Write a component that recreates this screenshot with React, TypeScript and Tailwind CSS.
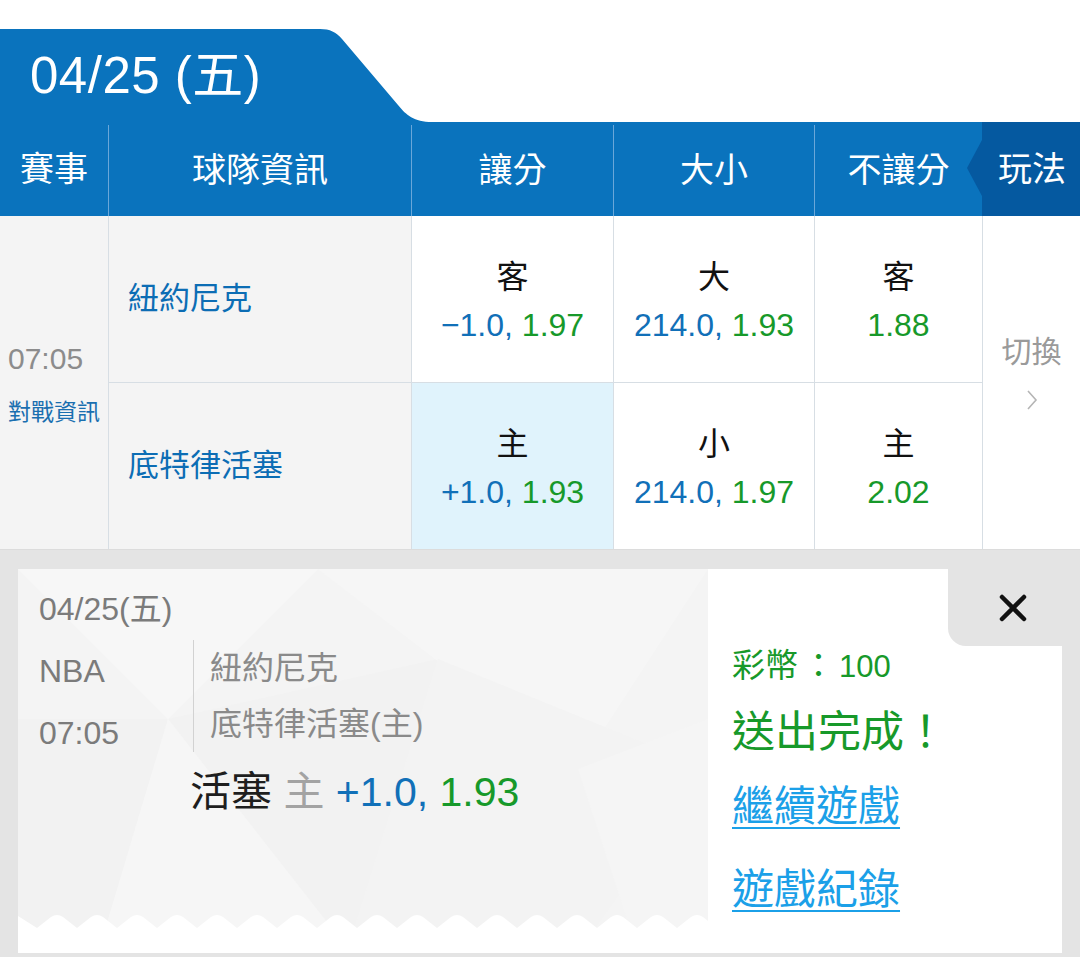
import React from "react";

const zigzag = (() => {
  let d = "M0 39 L0 2";
  for (let k = 0; k < 17; k++) {
    const v = 19 + 40 * k;
    const p = 39 + 40 * k;
    d += ` L${v} 14 L${p - 6} 3 Q${p} -1 ${p + 6} 3`;
  }
  d += " L699 14 L699 39 Z";
  return d;
})();

function Chevron() {
  return (
    <svg width="14" height="22" viewBox="0 0 14 22" fill="none">
      <path d="M3 2 L11 11 L3 20" stroke="#b5b5b5" strokeWidth="1.6" />
    </svg>
  );
}

function Close() {
  return (
    <svg width="28" height="28" viewBox="0 0 28 28">
      <path d="M3 3 L25 25 M25 3 L3 25" stroke="#111" strokeWidth="4.5" strokeLinecap="round" />
    </svg>
  );
}

function Odds({ label, line, price, hl }: { label: string; line?: string; price: string; hl?: boolean }) {
  return (
    <div
      className={
        "flex flex-col items-center justify-center pt-[4px] border-l border-[#d7dee4] text-[32px] " +
        (hl ? "bg-[#e0f3fc]" : "bg-white")
      }
    >
      <div className="leading-[48px] text-[#111]">{label}</div>
      <div className="leading-[48px]">
        {line && <span className="text-[#1170b8]">{line}, </span>}
        <span className="text-[#17992a]">{price}</span>
      </div>
    </div>
  );
}

export default function App() {
  return (
    <div className="w-[1080px] h-[957px] overflow-hidden bg-white font-['Liberation_Sans','Noto_Sans_CJK_TC',sans-serif]">
      {/* date tab */}
      <div className="pt-[29px] flex items-end">
        <div className="w-[310px] h-[93px] bg-[#0a73bd] flex items-center pl-[30px] text-white text-[51px] leading-none tracking-[0.5px]">
          04/25 (五)
        </div>
        <svg width="130" height="93" viewBox="0 0 130 93">
          <path d="M0 0 H10 C20 0 26 3 32 10 L88 76 C96 86 104 93 122 93 H0 Z" fill="#0a73bd" />
        </svg>
      </div>

      {/* header */}
      <div className="grid grid-cols-[108px_303px_202px_201px_168px_98px] h-[94px] bg-[#0a73bd] text-white text-[34px]">
        <div className="flex items-center justify-center">賽事</div>
        <div className="flex items-center justify-center border-l border-[#6aa7d9] mt-[3px]">球隊資訊</div>
        <div className="flex items-center justify-center border-l border-[#6aa7d9] mt-[3px]">讓分</div>
        <div className="flex items-center justify-center border-l border-[#6aa7d9] mt-[3px]">大小</div>
        <div className="flex items-center justify-center border-l border-[#6aa7d9] mt-[3px]">不讓分</div>
        <div className="relative flex items-center justify-center bg-[#0559a0] pl-[2px]">
          <svg className="absolute left-[-15px] top-[18px]" width="15" height="56" viewBox="0 0 15 56">
            <path d="M15 0 L0 28 L15 56 Z" fill="#0559a0" />
          </svg>
          玩法
        </div>
      </div>

      {/* body */}
      <div className="grid grid-cols-[108px_303px_202px_201px_168px_98px] grid-rows-[167px_166px]">
        <div className="row-span-2 bg-[#f4f4f4] flex flex-col justify-center pl-[8px]">
          <div className="text-[30px] leading-[40px] text-[#8c8c8c]">07:05</div>
          <div className="mt-[18px] text-[23px] leading-[30px] text-[#1a6fb0]">對戰資訊</div>
        </div>
        <div className="bg-[#f4f4f4] border-l border-b border-[#d7dee4] flex items-center pl-[19px] text-[31px] text-[#0c6db4]">
          紐約尼克
        </div>
        <div className="grid border-b border-[#d7dee4]"><Odds label="客" line="−1.0" price="1.97" /></div>
        <div className="grid border-b border-[#d7dee4]"><Odds label="大" line="214.0" price="1.93" /></div>
        <div className="grid border-b border-[#d7dee4]"><Odds label="客" price="1.88" /></div>
        <div className="row-span-2 bg-white border-l border-[#d7dee4] flex flex-col items-center justify-center pb-[22px]">
          <div className="text-[30px] leading-[40px] text-[#9a9a9a]">切換</div>
          <div className="mt-[17px] h-[22px]"><Chevron /></div>
        </div>
        <div className="bg-[#f4f4f4] border-l border-[#d7dee4] flex items-center pl-[19px] text-[31px] text-[#0c6db4]">
          底特律活塞
        </div>
        <Odds label="主" line="+1.0" price="1.93" hl />
        <Odds label="小" line="214.0" price="1.97" />
        <Odds label="主" price="2.02" />
      </div>

      {/* bet slip */}
      <div className="bg-[#e4e4e4] h-[408px] px-[18px] pt-[19px] border-t border-[#dcdcdc]">
        <div className="flex h-[384px]">
          <div className="relative w-[690px] bg-[#f4f4f4] overflow-hidden flex flex-col">
            <svg className="absolute inset-0" width="690" height="384" viewBox="0 0 690 384">
              <polygon points="0,0 300,0 150,150" fill="#f7f7f7" />
              <polygon points="150,150 420,90 330,380" fill="#f2f2f2" />
              <polygon points="300,0 690,0 560,200" fill="#f6f6f6" />
              <polygon points="420,90 690,200 560,384 330,380" fill="#f3f3f3" />
              <polygon points="0,150 150,150 80,384 0,384" fill="#f2f2f2" />
              <polygon points="80,384 150,150 330,380" fill="#f6f6f6" />
              <polygon points="560,200 690,150 690,384 620,384" fill="#f5f5f5" />
            </svg>
            <div className="relative flex-1 pl-[21px] pt-[20px]">
              <div className="text-[32px] leading-[40px] text-[#7b7b7b]">04/25(五)</div>
              <div className="flex items-start mt-[11px]">
                <div className="w-[154px] text-[32px] text-[#7b7b7b]">
                  <div className="leading-[62px]">NBA</div>
                  <div className="leading-[62px]">07:05</div>
                </div>
                <div className="border-l border-[#d2d2d2] pl-[16px] text-[32px] text-[#8a8a8a]">
                  <div className="leading-[56px]">紐約尼克</div>
                  <div className="leading-[56px]">底特律活塞(主)</div>
                </div>
              </div>
              <div className="ml-[151px] mt-[3px] text-[41px] leading-[50px]">
                <span className="text-[#1e1e1e]">活塞</span>{" "}
                <span className="text-[#a3a3a3]">主</span>{" "}
                <span className="text-[#1170b8]">+1.0,</span>{" "}
                <span className="text-[#17992a]">1.93</span>
              </div>
            </div>
            <svg className="relative block" width="690" height="39" viewBox="0 0 690 39">
              <path d={zigzag} fill="#ffffff" />
            </svg>
          </div>
          <div className="relative flex-1 bg-white pl-[24px] pt-[77px]">
            <div className="absolute top-0 right-0 w-[114px] h-[77px] bg-[#e4e4e4] rounded-bl-[18px] flex items-center justify-center pl-[16px]">
              <Close />
            </div>
            <div className="text-[33px] leading-[40px] text-[#17992a]">
              彩幣<span className="mx-[4px]">：</span>
              <span className="text-[31px]">100</span>
            </div>
            <div className="mt-[17px] text-[43px] leading-[56px] text-[#17992a]">送出完成！</div>
            <div className="mt-[21px] text-[42px] leading-[52px] text-[#1ba0e8] underline underline-offset-[6px] decoration-2">
              繼續遊戲
            </div>
            <div className="mt-[31px] text-[42px] leading-[52px] text-[#1ba0e8] underline underline-offset-[6px] decoration-2">
              遊戲紀錄
            </div>
          </div>
        </div>
      </div>
    </div>
  );
}
